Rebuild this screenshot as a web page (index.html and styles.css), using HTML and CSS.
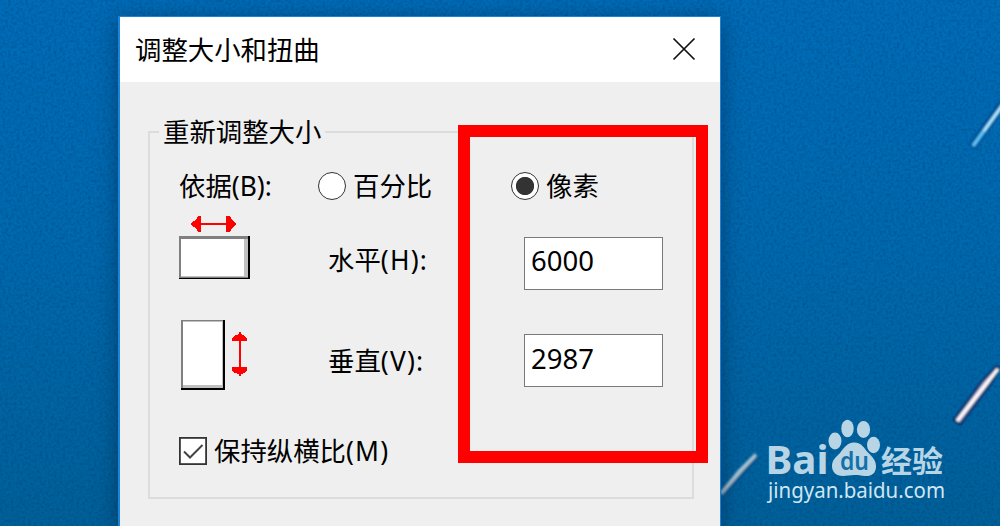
FILE: index.html
```html
<!DOCTYPE html>
<html lang="zh-CN">
<head>
    <meta charset="UTF-8">
    <title>调整大小和扭曲</title>
    <link rel="stylesheet" href="styles.css">
</head>
<body>
    <svg class="wallpaper" width="1000" height="526" viewBox="0 0 1000 526">
        <defs>
            <linearGradient id="sky" x1="0" y1="0" x2="0" y2="1">
                <stop offset="0" stop-color="#006cb8"/>
                <stop offset="0.45" stop-color="#0069af"/>
                <stop offset="1" stop-color="#006099"/>
            </linearGradient>
            <filter id="grain" x="0" y="0" width="100%" height="100%" color-interpolation-filters="sRGB">
                <feTurbulence type="fractalNoise" baseFrequency="0.35" numOctaves="2" seed="4"/>
                <feColorMatrix values="0 0 0 0 0  0 0 0 0 0.2  0 0 0 0 0.38  0.65 0 0 0 -0.25"/>
            </filter>
            <filter id="soft"><feGaussianBlur stdDeviation="0.8"/></filter>
        </defs>
        <rect width="1000" height="526" fill="url(#sky)"/>
        <rect width="1000" height="526" filter="url(#grain)"/>
        <g filter="url(#soft)">
            <path d="M972 147 L1004 102" stroke="#00488e" stroke-width="8"/>
            <path d="M973 146 L1004 103" stroke="#5cc8fb" stroke-width="3.5"/>
            <path d="M984 131 L1004 103" stroke="#c8f4ff" stroke-width="2"/>
            <path d="M954 420 L982 382 L996 367 L1000 368 L991 383 L960 424 Z" fill="#c0b3d0" stroke="#0b2a66" stroke-width="2.5"/>
            <path d="M957 421 L998 369" stroke="#fff" stroke-width="3"/>
            <path d="M722 494 L756 457" stroke="#00558c" stroke-width="7"/>
            <path d="M720 492 L738 470 L755 453 L757 456 L742 472 L722 495 Z" fill="#a9c4d2"/>
        </g>
    </svg>

    <div class="dialog">
        <div class="titlebar">
            <span>调整大小和扭曲</span>
            <svg class="close" width="24" height="24" viewBox="0 0 24 24">
                <path d="M1.5 1.5 L22.5 22.5 M22.5 1.5 L1.5 22.5" stroke="#111" stroke-width="1.7" fill="none"/>
            </svg>
        </div>
        <fieldset class="group">
            <legend>重新调整大小</legend>
            <div class="options">
                <span>依据(B):</span>
                <label class="choice"><i class="radio"></i>百分比</label>
                <label class="choice"><i class="radio checked"></i>像素</label>

                <svg width="76" height="96" viewBox="179 213 76 96" shape-rendering="crispEdges">
                    <rect x="179" y="236" width="71" height="43" fill="#000"/>
                    <rect x="179" y="236" width="69" height="42" fill="#808080"/>
                    <rect x="181" y="239" width="67" height="38" fill="#c0c0c0"/>
                    <rect x="181" y="239" width="63" height="37" fill="#fff"/>
                    <path d="M194 223h38v2h-38z" fill="#f00"/>
                    <path d="M191 223l5-3 2-4h3v16h-3l-2-4-5-3z" fill="#f00"/>
                    <path d="M236 223l-4-3-2-4h-4v16h4l2-4 4-3z" fill="#f00"/>
                </svg>
                <span class="name horizontal">水平<span class="key">(H):</span></span>
                <input class="value width" type="text" value="6000">

                <svg width="76" height="103" viewBox="179 309 76 103" shape-rendering="crispEdges">
                    <rect x="181" y="320" width="44" height="70" fill="#000"/>
                    <rect x="181" y="320" width="42" height="68" fill="#808080"/>
                    <rect x="183" y="321" width="40" height="67" fill="#c0c0c0"/>
                    <rect x="183" y="322" width="39" height="63" fill="#fff"/>
                    <path d="M239 334h1.500v40h-1.500z" fill="#f00"/>
                    <path d="M239 332h2v2l4 2 2 3v2h-15v-2l2-3 5-2z" fill="#f00"/>
                    <path d="M232 367h15v3l-2 3-4 1v2h-2v-2l-5-1-2-3z" fill="#f00"/>
                </svg>
                <span class="name">垂直<span class="key">(V):</span></span>
                <input class="value" type="text" value="2987">

                <label class="choice keep">
                    <svg width="28" height="28" viewBox="0 0 28 28">
                        <rect x="0.9" y="0.9" width="26.200" height="26.200" fill="#fff" stroke="#333" stroke-width="1.8"/>
                        <path d="M5 14.500 L11 20.500 L23.500 8" fill="none" stroke="#444" stroke-width="2"/>
                    </svg>
                    <span>保持纵横比<span class="key">(M)</span></span>
                </label>
            </div>
        </fieldset>
    </div>

    <div class="highlight"></div>

    <svg class="logo" width="190" height="90" viewBox="760 415 190 90">
        <g fill="#b8d5e6">
            <text class="brand" x="765.500" y="474" font-size="39" textLength="63" lengthAdjust="spacingAndGlyphs">Bai</text>
            <ellipse cx="835" cy="441" rx="6.500" ry="8.500"/>
            <ellipse cx="847.500" cy="428.500" rx="6.200" ry="8.700"/>
            <ellipse cx="863.500" cy="429.500" rx="6.600" ry="8.500"/>
            <ellipse cx="873.500" cy="445" rx="6.500" ry="8.200"/>
            <path d="M854 442.500c8 0 10 6 14 10 5 5 8 8 8 14 0 7-5 10-11 9.500-4-.5-7-1-11-1s-7 1-11 1c-7 0-11-4-11-10 0-6 4-9 8-13 4-5 7-10.500 14-10.500z"/>
            <text class="cjk" x="881" y="471.500" font-size="30" textLength="62" lengthAdjust="spacingAndGlyphs">经验</text>
            <text class="url" x="768" y="498" font-size="21" textLength="177" lengthAdjust="spacingAndGlyphs" fill="#d0e6f2">jingyan.baidu.com</text>
        </g>
        <text class="du" x="840" y="470" font-size="25" textLength="29" lengthAdjust="spacingAndGlyphs" fill="#1470a9">du</text>
    </svg>
</body>
</html>
```
FILE: styles.css
```css
* {
    box-sizing: border-box;
}
body {
    margin: 0;
    width: 1000px;
    height: 526px;
    overflow: hidden;
    position: relative;
    background: #0067ae;
    color: #000;
    font-family: "Noto Sans", "Noto Sans CJK SC", sans-serif;
    font-size: 26.4px;
}
svg {
    display: block;
}
.wallpaper {
    position: absolute;
    left: 0;
    top: 0;
}
.dialog {
    position: absolute;
    left: 118px;
    top: 16px;
    width: 603px;
    height: 510px;
    border: 2px solid #1a83da;
    border-top-width: 1px;
    border-right-width: 1px;
    border-bottom: 0;
    background: #efefef;
    box-shadow: 0 4px 20px rgba(0, 30, 60, 0.5);
}
.titlebar {
    display: flex;
    align-items: center;
    justify-content: space-between;
    height: 65px;
    padding: 0 24px 2px 15px;
    background: #fff;
}
.group {
    width: 546px;
    height: 385px;
    margin: 32px 0 0 28px;
    padding: 0 0 0 29px;
    border: 2px solid #dcdcdc;
}
.group legend {
    height: 36px;
    line-height: 36px;
    margin-left: -20px;
    padding: 0 4px;
}
.options {
    display: grid;
    grid-template-columns: 139px 193px 1fr;
    grid-template-rows: 54px 96px 103px 78px;
    align-items: center;
    padding-top: 9px;
    line-height: 36px;
}
.choice {
    display: flex;
    align-items: center;
    gap: 7px;
}
.radio {
    width: 28px;
    height: 28px;
    border: 1.5px solid #333;
    border-radius: 50%;
    background: #fff;
}
.radio.checked {
    background: radial-gradient(circle, #333 8.7px, #fff 9.5px);
}
.name {
    margin-left: 10px;
}
.key {
    letter-spacing: 1.2px;
}
.horizontal {
    margin-bottom: 3px;
}
.value {
    width: 139px;
    height: 53px;
    margin-left: 13px;
    padding: 0 6px 5px;
    border: 1.5px solid #7a7a7a;
    background: #fff;
    color: #000;
    font: 27.5px "Noto Sans", sans-serif;
}
.width {
    margin-top: 4px;
}
.keep {
    grid-column: 1 / 3;
}
.highlight {
    position: absolute;
    left: 458px;
    top: 125px;
    width: 250px;
    height: 338px;
    border: 12px solid #f00;
}
.logo {
    position: absolute;
    left: 760px;
    top: 415px;
}
.brand {
    font-family: "Noto Sans", sans-serif;
    font-weight: 700;
}
.du {
    font-family: "Noto Sans", sans-serif;
    font-weight: 600;
}
.cjk {
    font-family: "Noto Sans CJK SC", sans-serif;
    font-weight: 700;
}
.url {
    font-family: "Noto Sans", sans-serif;
}
```
